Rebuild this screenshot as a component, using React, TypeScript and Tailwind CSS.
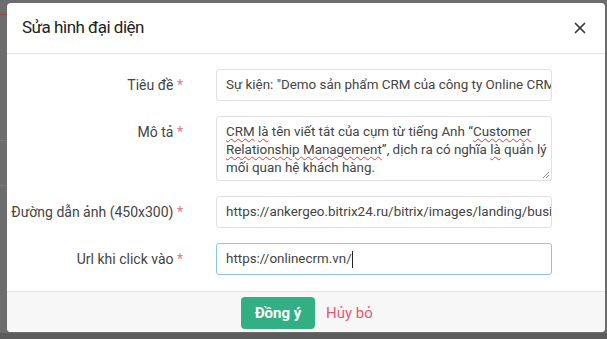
import { X } from "lucide-react";

const font = { fontFamily: 'Roboto, "Noto Sans", sans-serif' };

const Label = ({ text, top = false }: { text: string; top?: boolean }) => (
  <div
    className={`w-[176px] shrink-0 text-right text-[14px] text-[#444] leading-5 whitespace-nowrap ${top ? "pt-[6px]" : "self-center"}`}
  >
    {text} <span className="text-[#e8768a]">*</span>
  </div>
);

const Squiggle = ({ children }: { children: React.ReactNode }) => (
  <span className="underline decoration-wavy decoration-[#e53935] decoration-1 underline-offset-[2px]">
    {children}
  </span>
);

const inputCls =
  "ml-[33px] w-[336px] h-[32px] border rounded-[3px] px-[9px] flex items-center overflow-hidden whitespace-nowrap text-[13.4px] text-[#444]";

export default function App() {
  return (
    <div
      className="relative w-[607px] h-[339px] overflow-hidden bg-[#6d6d6d] pt-[3px] pl-[7px]"
      style={font}
    >
      {/* page behind the overlay */}
      <div className="absolute left-0 top-[14px] w-[7px] h-px bg-[#8a4a3a]" />
      <div className="absolute left-0 top-[140px] w-[7px] h-px bg-[#7a7a7a]" />
      <div className="absolute left-0 top-[185px] w-[7px] h-px bg-[#7a7a7a]" />
      <div className="absolute left-0 bottom-0 w-full h-[6px] bg-[#5c5c5c]" />

      <div className="relative w-[598px] h-[329px] bg-white rounded-[4px] overflow-hidden flex flex-col">
        <div className="h-[51px] shrink-0 flex items-center justify-between pl-[15px] pr-[16px] border-b border-[#e5e5e5]">
          <span className="text-[17px] tracking-[-0.5px] text-[#222]">Sửa hình đại diện</span>
          <X className="w-[18px] h-[18px] text-[#333]" strokeWidth={2.2} />
        </div>

        <div className="flex flex-col gap-[15px] pt-[15px] pb-[16px]">
          <div className="flex">
            <Label text="Tiêu đề" />
            <div className={`${inputCls} border-[#e0e0e0]`}>
              Sự kiện: "Demo sản phẩm CRM của công ty Online CRM"
            </div>
          </div>

          <div className="flex">
            <Label text="Mô tả" top />
            <div className="relative ml-[33px] w-[336px] h-[65px] border border-[#e0e0e0] rounded-[3px] pl-[9px] pr-[1px] pt-[6px] text-[13.4px] leading-[18px] text-[#444]">
              <Squiggle>CRM</Squiggle> <Squiggle>là</Squiggle> tên viết tắt của cụm từ tiếng Anh “<Squiggle>Customer</Squiggle>{" "}
              <Squiggle>Relationship Management</Squiggle>”, dịch ra có nghĩa <Squiggle>là</Squiggle> quản lý mối quan hệ khách hàng.
              <svg className="absolute right-[1px] bottom-[1px] w-[8px] h-[8px]" viewBox="0 0 8 8">
                <path d="M7 1L1 7M7 4L4 7" stroke="#888" strokeWidth="1" />
              </svg>
            </div>
          </div>

          <div className="flex">
            <Label text="Đường dẫn ảnh (450x300)" />
            <div className={`${inputCls} border-[#e0e0e0]`}>
              https://ankergeo.bitrix24.ru/bitrix/images/landing/business/1920x1080/img3.jpg
            </div>
          </div>

          <div className="flex">
            <Label text="Url khi click vào" />
            <div className={`${inputCls} border-[#8cc4ef]`}>
              https://onlinecrm.vn/
              <span className="inline-block w-px h-[17px] bg-[#222]" />
            </div>
          </div>
        </div>

        <div className="flex-1 bg-[#f7f7f7] border-t border-[#e5e5e5] flex items-start pt-[5px] pl-[234px] gap-[11px]">
          <button className="w-[74px] h-[32px] rounded-[4px] bg-[#33b083] text-white font-bold text-[15px]">
            Đồng ý
          </button>
          <span className="text-[15px] text-[#e65a72] leading-[32px]">Hủy bỏ</span>
        </div>
      </div>
    </div>
  );
}
